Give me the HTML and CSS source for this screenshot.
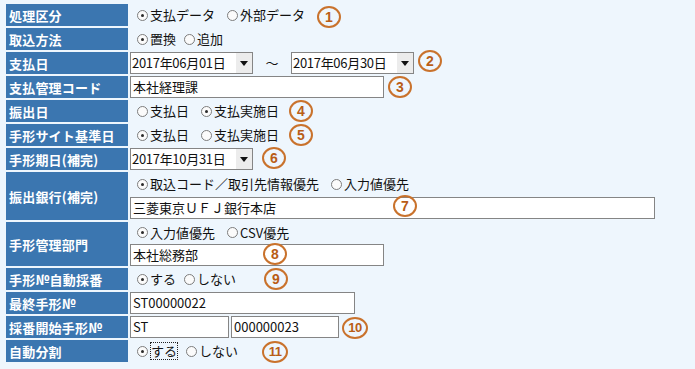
FILE: index.html
```html
<!DOCTYPE html>
<html lang="ja">
<head>
<meta charset="utf-8">
<title>手形設定</title>
<link rel="stylesheet" href="styles.css">
</head>
<body>
<div class="page">
  <div class="form">
    <div class="row">
      <div class="lbl">処理区分</div>
      <div class="val"><label class="opt"><span class="rb on"></span>支払データ</label><label class="opt"><span class="rb"></span>外部データ</label></div>
    </div>
    <div class="row">
      <div class="lbl">取込方法</div>
      <div class="val"><label class="opt s"><span class="rb on"></span>置換</label><label class="opt"><span class="rb"></span>追加</label></div>
    </div>
    <div class="row">
      <div class="lbl">支払日</div>
      <div class="val flat"><div class="sel"><span class="sel-text">2017年06月01日</span><span class="sel-btn"></span></div><span class="tilde">～</span><div class="sel"><span class="sel-text">2017年06月30日</span><span class="sel-btn"></span></div></div>
    </div>
    <div class="row">
      <div class="lbl">支払管理コード</div>
      <div class="val flat"><div class="inp w254">本社経理課</div></div>
    </div>
    <div class="row">
      <div class="lbl">振出日</div>
      <div class="val"><label class="opt"><span class="rb"></span>支払日</label><label class="opt"><span class="rb on"></span>支払実施日</label></div>
    </div>
    <div class="row">
      <div class="lbl">手形サイト基準日</div>
      <div class="val"><label class="opt"><span class="rb on"></span>支払日</label><label class="opt"><span class="rb"></span>支払実施日</label></div>
    </div>
    <div class="row">
      <div class="lbl">手形期日(補完)</div>
      <div class="val flat"><div class="sel"><span class="sel-text">2017年10月31日</span><span class="sel-btn"></span></div></div>
    </div>
    <div class="row tall48">
      <div class="lbl">振出銀行(補完)</div>
      <div class="val stack">
        <div class="line"><label class="opt"><span class="rb on"></span>取込コード／取引先情報優先</label><label class="opt"><span class="rb"></span>入力値優先</label></div>
        <div class="line flat"><div class="inp w525">三菱東京ＵＦＪ銀行本店</div></div>
      </div>
    </div>
    <div class="row tall44">
      <div class="lbl">手形管理部門</div>
      <div class="val stack tight">
        <div class="line short"><label class="opt"><span class="rb on"></span>入力値優先</label><label class="opt"><span class="rb"></span>CSV優先</label></div>
        <div class="line flat"><div class="inp w254">本社総務部</div></div>
      </div>
    </div>
    <div class="row">
      <div class="lbl">手形№自動採番</div>
      <div class="val"><label class="opt s"><span class="rb on"></span>する</label><label class="opt"><span class="rb"></span>しない</label></div>
    </div>
    <div class="row">
      <div class="lbl">最終手形№</div>
      <div class="val flat"><div class="inp w225">ST00000022</div></div>
    </div>
    <div class="row">
      <div class="lbl">採番開始手形№</div>
      <div class="val flat pair"><div class="inp w99">ST</div><div class="inp w108">000000023</div></div>
    </div>
    <div class="row">
      <div class="lbl">自動分割</div>
      <div class="val"><label class="opt s"><span class="rb on"></span><span class="focus">する</span></label><label class="opt"><span class="rb"></span>しない</label></div>
    </div>
  </div>

  <span class="mark m1">1</span>
  <span class="mark m2">2</span>
  <span class="mark m3">3</span>
  <span class="mark m4">4</span>
  <span class="mark m5">5</span>
  <span class="mark m6">6</span>
  <span class="mark m7">7</span>
  <span class="mark m8">8</span>
  <span class="mark m9">9</span>
  <span class="mark wide m10">10</span>
  <span class="mark wide m11">11</span>
</div>
</body>
</html>
```

FILE: styles.css
```css
* { box-sizing: border-box; }

html, body {
  margin: 0;
  padding: 0;
  background: #eef6fd;
}

body {
  font-family: "Noto Sans CJK JP", "Liberation Sans", sans-serif;
  font-size: 13px;
  color: #111;
  width: 695px;
  height: 369px;
  overflow: hidden;
}

.page {
  position: relative;
  width: 695px;
  height: 369px;
  padding: 4px 0 0 6px;
}

.form {
  display: flex;
  flex-direction: column;
  gap: 2px;
}

.row {
  display: flex;
  gap: 2px;
  height: 22px;
}

.row.tall48 { height: 48px; }
.row.tall44 { height: 44px; }

.lbl {
  width: 122px;
  flex: none;
  background: #3b76b0;
  color: #fff;
  font-weight: bold;
  display: flex;
  align-items: center;
  padding-left: 3px;
  line-height: 1;
  letter-spacing: 0.2px;
}

.val {
  flex: 1;
  display: flex;
  align-items: center;
  padding-left: 7px;
  line-height: 22px;
  white-space: nowrap;
}

.val.flat { padding-left: 0; }

.val.stack {
  flex-direction: column;
  align-items: stretch;
  justify-content: center;
  gap: 2px;
  padding-left: 0;
}

.val.stack.tight { gap: 1px; }

.line {
  display: flex;
  align-items: center;
  height: 22px;
  padding-left: 7px;
}

.line.short { height: 21px; }
.line.flat { padding-left: 0; }

.opt {
  display: inline-flex;
  align-items: center;
  margin-right: 12px;
}

.opt.s { margin-right: 8px; }

.rb {
  display: inline-block;
  position: relative;
  width: 11px;
  height: 11px;
  border: 1px solid #7d7d7d;
  border-radius: 50%;
  background: #fbfbfb;
  margin-right: 2px;
}

.rb.on::after {
  content: "";
  position: absolute;
  left: 3px;
  top: 3px;
  width: 3px;
  height: 3px;
  border-radius: 50%;
  background: #2a2a2a;
}

.focus {
  outline: 1px dotted #222;
  outline-offset: -1px;
  padding: 0 1px;
  line-height: 18px;
}

.sel {
  display: flex;
  width: 123px;
  height: 22px;
  border: 1px solid #858585;
  background: #fff;
}

.sel-text {
  flex: 1;
  padding-left: 1px;
  line-height: 20px;
  letter-spacing: -0.3px;
}

.sel-btn {
  width: 16px;
  background: #ececec;
  display: flex;
  align-items: center;
  justify-content: center;
}

.sel-btn::before {
  content: "";
  border-left: 4px solid transparent;
  border-right: 4px solid transparent;
  border-top: 5px solid #111;
}

.tilde {
  width: 38px;
  text-align: center;
}

.inp {
  height: 22px;
  border: 1px solid #858585;
  background: #fff;
  padding-left: 2px;
  line-height: 20px;
}

.w254 { width: 254px; }
.w525 { width: 525px; }
.w225 { width: 225px; }
.w99 { width: 99px; }
.w108 { width: 108px; }

.pair { gap: 2px; }

.mark {
  position: absolute;
  width: 24px;
  height: 22px;
  border: 2px solid #c9722c;
  border-radius: 50%;
  color: #b95d16;
  font-family: "Liberation Sans", Arial, sans-serif;
  font-weight: bold;
  font-size: 14px;
  line-height: 18px;
  text-align: center;
}

.mark.wide { width: 26px; font-size: 13px; letter-spacing: -0.5px; }

.m1 { left: 317px; top: 6px; }
.m2 { left: 418px; top: 50px; }
.m3 { left: 388px; top: 76px; }
.m4 { left: 289px; top: 100px; }
.m5 { left: 289px; top: 124px; }
.m6 { left: 262px; top: 147px; }
.m7 { left: 393px; top: 195px; }
.m8 { left: 263px; top: 243px; }
.m9 { left: 264px; top: 268px; }
.m10 { left: 342px; top: 317px; }
.m11 { left: 262px; top: 341px; }
```
